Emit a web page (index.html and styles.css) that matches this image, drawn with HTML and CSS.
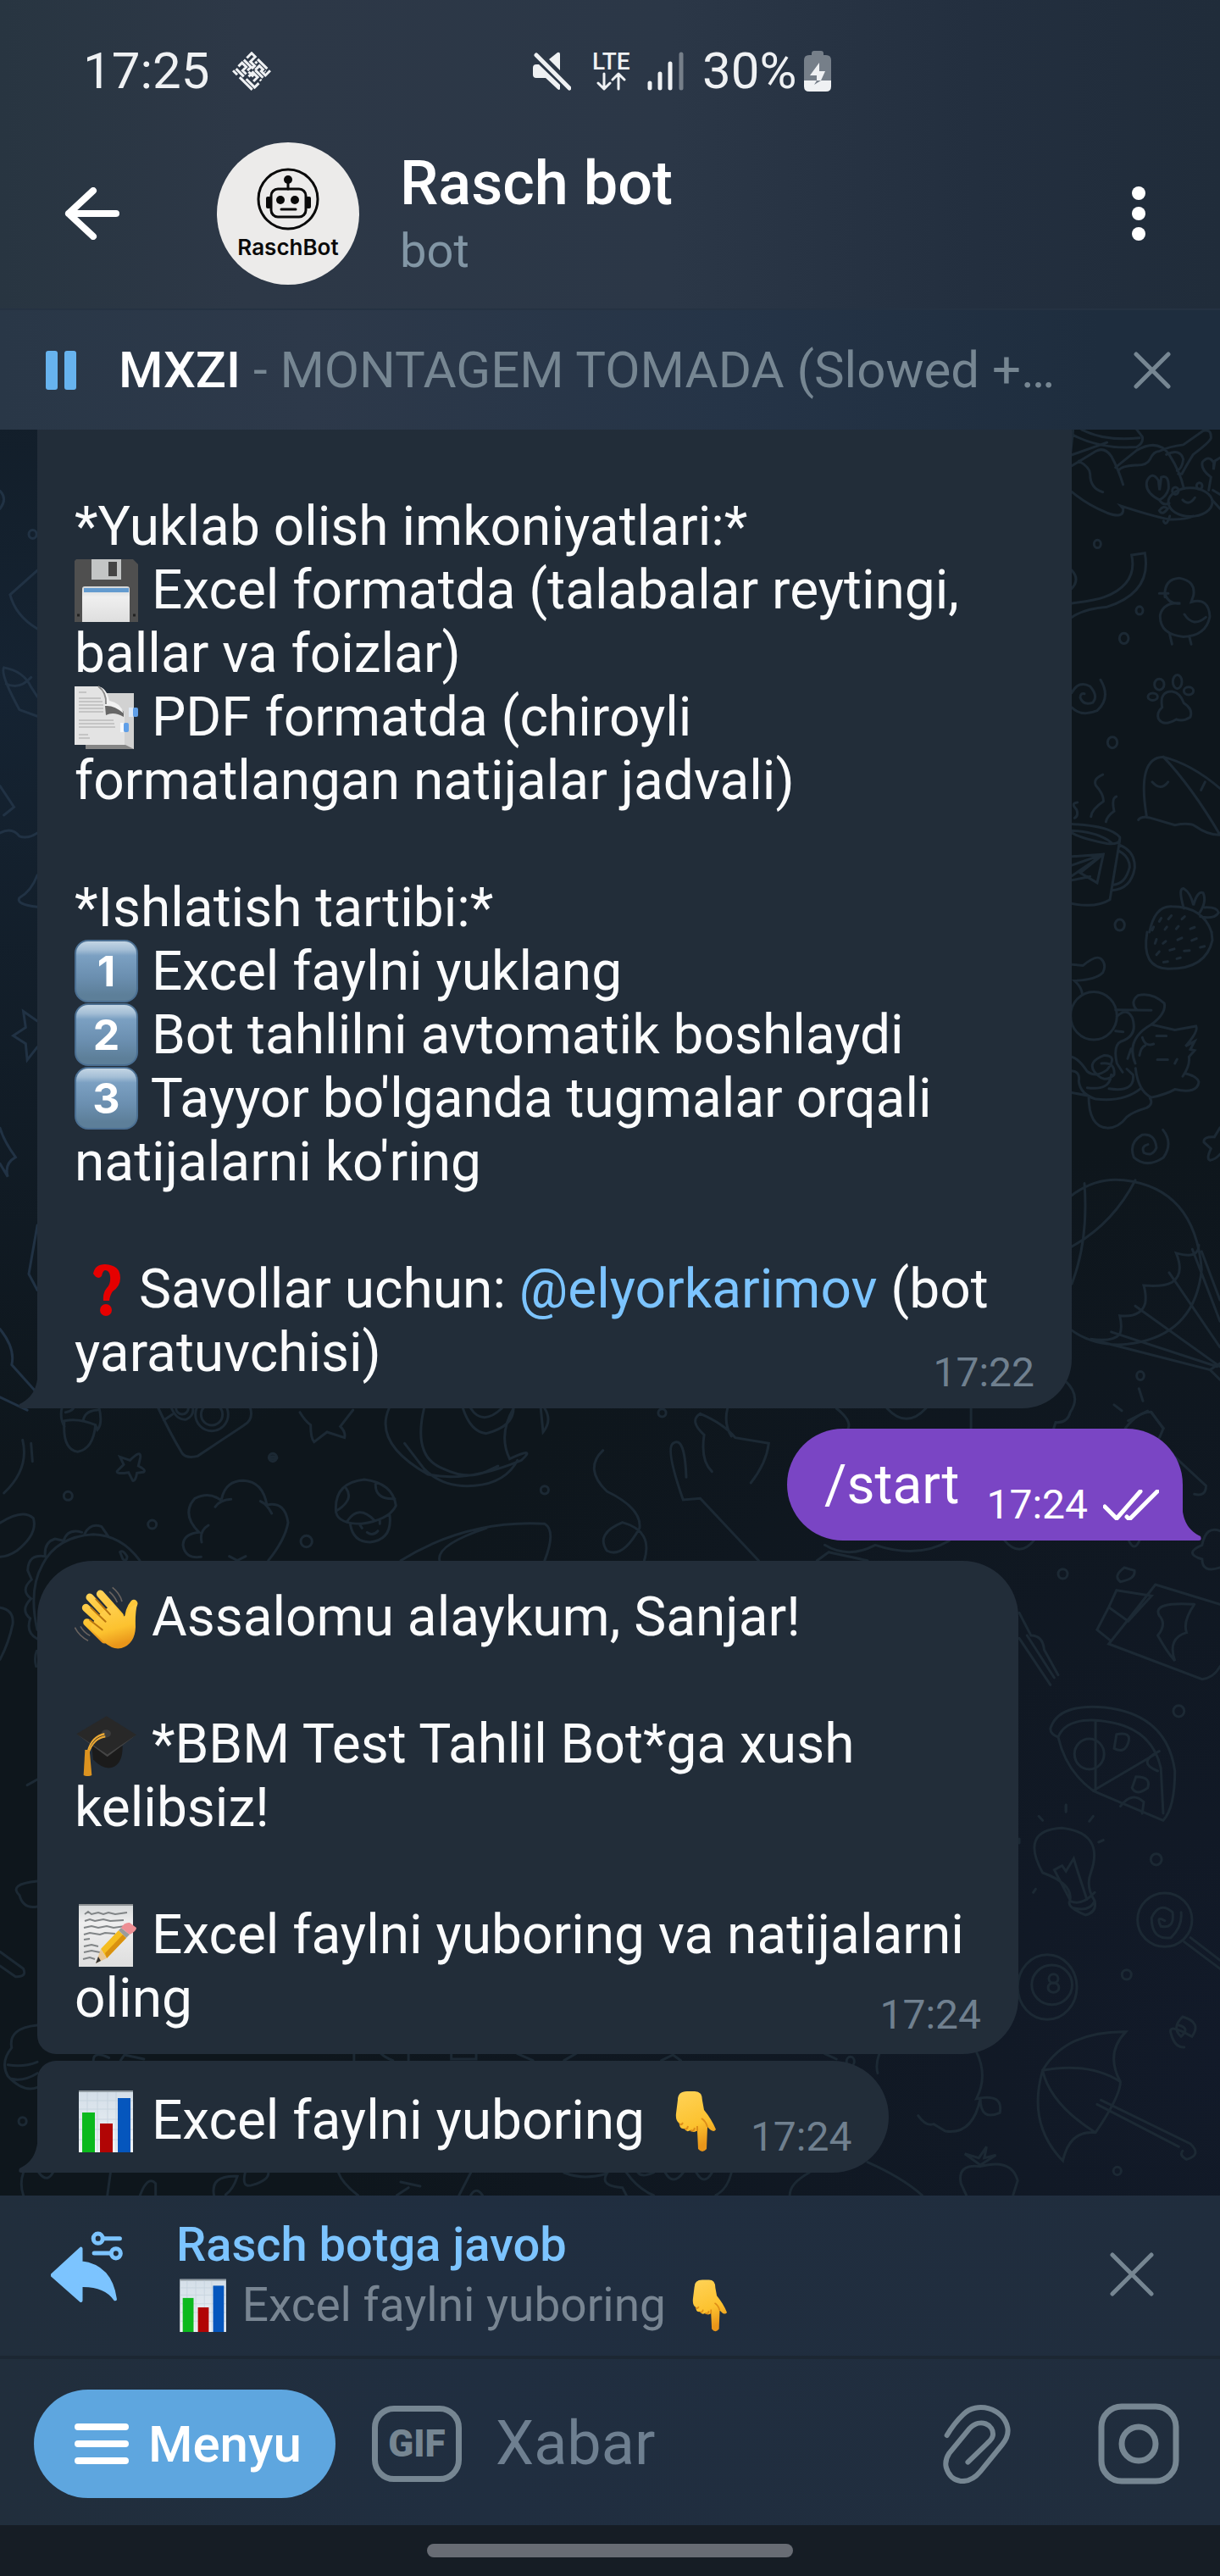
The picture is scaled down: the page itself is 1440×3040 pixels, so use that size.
FILE: index.html
```html
<!DOCTYPE html>
<html lang="uz">
<head>
<meta charset="utf-8">
<meta name="viewport" content="width=device-width, initial-scale=1">
<title>Rasch bot</title>
<link rel="stylesheet" href="styles.css">
</head>
<body>
<svg class="sprite" width="0" height="0" aria-hidden="true">
  <defs>
    <linearGradient id="skin" x1="0" y1="0" x2="0.3" y2="1"><stop offset="0" stop-color="#ffd358"/><stop offset="0.65" stop-color="#fcc22f"/><stop offset="1" stop-color="#e9961a"/></linearGradient>
    <linearGradient id="paper" x1="0" y1="0" x2="0" y2="1"><stop offset="0" stop-color="#d3d6d8"/><stop offset="0.3" stop-color="#efefef"/><stop offset="1" stop-color="#dedede"/></linearGradient>
    <linearGradient id="grid" x1="0" y1="0" x2="0" y2="1"><stop offset="0" stop-color="#d3dee8"/><stop offset="1" stop-color="#f0f4f7"/></linearGradient>
  </defs>
  <symbol id="chart" viewBox="0 0 75 75">
    <rect x="5" y="2" width="64" height="73" fill="url(#grid)"/>
    <path d="M5 3H69" stroke="#8f999f" stroke-width="2"/>
    <path d="M15 4V75M27 4V75M39 4V75M49 4V75M5 14H69M5 24H69M5 36H69M5 48H69M5 60H69" stroke="#bccbd8" stroke-width="1" opacity="0.6"/>
    <rect x="9" y="28" width="15" height="47" fill="#0cb91d"/>
    <rect x="30" y="41" width="15" height="34" fill="#b10505"/>
    <rect x="51" y="11" width="15" height="64" fill="#0556bd"/>
  </symbol>
  <symbol id="hand-down" viewBox="0 0 75 75">
    <path d="M23 13Q23 3 34 3H43Q52 3 52 14L54 25Q63 36 68 48Q65 53 58 45L57 71Q52 77 47 71L46 49Q42 53 38 49Q33 52 31 47Q25 48 25 41Q20 38 21 29Z" fill="url(#skin)"/>
    <path d="M25 41Q27 44 29 40M31 47Q34 49 35 44M38 49Q42 51 43 46M46 50V44M58 45Q56 38 51 35" fill="none" stroke="#dd8d18" stroke-width="2"/>
  </symbol>
</svg>

<header class="top">
  <div class="status">
    <div class="status-left">
      <span>17:25</span>
      <svg class="mosaic" viewBox="0 0 46 46" aria-hidden="true"><g transform="rotate(-45 23 23) translate(7 7)"><path d="M1 0V7M1 11V32M5 1V14M5 18V32H12M9 1H15V8H9V14M9 18H16V26H9M19 0V12H13M13 22V14M23 1H31V7H23V14H18M20 18V31M20 18H27V24H24V31H32M31 11V27M27 11V14M16 30V32M27 28V27" fill="none" stroke="#eff1f3" stroke-width="3"/></g></svg>
    </div>
    <div class="status-right">
      <svg class="mute" viewBox="0 0 45 46" aria-label="Ovozsiz"><path d="M5 15H7L32 39V44Q31 46 29 44L15 31H4Q0 31 0 27V19Q0 15 4 15ZM19 9L29 1Q32 0 32 3V22Z" fill="#eff1f3"/><path d="M6 2L45 41" stroke="#2d3847" stroke-width="5"/><path d="M4 4L43 43" stroke="#eff1f3" stroke-width="5" stroke-linecap="round"/></svg>
      <div class="lte"><span>LTE</span>
        <svg viewBox="0 0 46 22" aria-hidden="true"><path d="M14 2V19M7 13L14 20L21 13M31 20V3M24 9L31 2L38 9" fill="none" stroke="#eff1f3" stroke-width="3" stroke-linecap="round" stroke-linejoin="round"/></svg>
      </div>
      <svg class="signal" viewBox="0 0 44 46" aria-hidden="true"><path d="M3 37V43M15 26V43M27 14V43" stroke="#eff1f3" stroke-width="5" stroke-linecap="round"/><path d="M40 3V43" stroke="#767f89" stroke-width="5" stroke-linecap="round"/></svg>
      <span class="percent">30%</span>
      <svg class="battery" viewBox="0 0 32 48" aria-hidden="true"><path d="M9 5V3Q9 0 12 0H20Q23 0 23 3V5H26Q32 5 32 11V35H0V11Q0 5 6 5Z" fill="#767f89"/><path d="M0 35H32V42Q32 48 26 48H6Q0 48 0 42Z" fill="#eff1f3"/><path d="M18 14L7 29H15V35H20L25 24H18Z" fill="#eff1f3"/><path d="M12 40L15 35H20Z" fill="#767f89"/></svg>
    </div>
  </div>
  <div class="chat-head">
    <button class="icon-button back" aria-label="Orqaga"><svg viewBox="0 0 65 62" width="65" height="62"><path d="M34 4L5 31L34 58M5 31H61" fill="none" stroke="#fff" stroke-width="8" stroke-linecap="round" stroke-linejoin="round"/></svg></button>
    <div class="avatar">
      <svg viewBox="0 0 74 74" width="74" height="74" aria-hidden="true"><g fill="none" stroke="#0a0a0a" stroke-width="3"><circle cx="37" cy="37" r="35"/><rect x="17" y="25" width="41" height="33" rx="8"/><path d="M37 25V14M29 49H46" stroke-linecap="round"/></g><g fill="#0a0a0a"><circle cx="37" cy="14" r="5"/><circle cx="28" cy="38" r="5"/><circle cx="45" cy="38" r="5"/><rect x="11" y="34" width="6" height="14" rx="2"/><rect x="58" y="34" width="6" height="14" rx="2"/></g></svg>
      <span>RaschBot</span>
    </div>
    <div class="who">
      <h1>Rasch bot</h1>
      <p>bot</p>
    </div>
    <button class="icon-button" aria-label="Yana"><svg viewBox="0 0 40 66" width="40" height="66" fill="#fff"><circle cx="20" cy="9" r="8"/><circle cx="20" cy="33" r="8"/><circle cx="20" cy="57" r="8"/></svg></button>
  </div>
</header>

<section class="player">
  <button class="icon-button" aria-label="Pauza"><svg viewBox="0 0 36 46" width="36" height="46" fill="#67b3ee"><rect width="14" height="46" rx="3"/><rect x="22" width="14" height="46" rx="3"/></svg></button>
  <p class="track"><strong>MXZI</strong> - MONTAGEM TOMADA (Slowed +…</p>
  <button class="icon-button" aria-label="Yopish"><svg viewBox="0 0 44 44" width="44" height="44"><path d="M3 3L41 41M41 3L3 41" stroke="#768692" stroke-width="5" stroke-linecap="round"/></svg></button>
</section>

<main class="chat">
  <svg class="doodles" viewBox="0 507 1440 2084" preserveAspectRatio="xMaxYMax slice" aria-hidden="true">
    <g transform="translate(1160 500) scale(0.33333 0.38265)">
      <path d="M320 18L310 98L440 58M350 18Q430 55 555 44M320 35Q420 80 545 72Q570 60 565 40L545 18M315 130L400 85Q430 70 455 100Q480 140 497 188M340 115Q380 135 380 155Q380 200 425 211M315 210Q370 250 440 275Q500 295 497 262L488 253Q600 285 660 295Q720 297 745 285M470 135L545 82Q620 45 660 95Q700 150 712 200M480 145Q490 130 540 128Q580 130 592 110Q605 85 625 85Q660 70 710 65L780 22Q810 15 808 45Q800 60 745 95Q720 130 705 155L692 155M650 95Q700 75 710 110Q705 140 688 145"/>
      <ellipse cx="735" cy="242" rx="78" ry="44"/><path d="M708 235Q730 255 751 228M625 235Q570 210 582 175Q600 145 622 175L626 205L632 165Q660 155 658 200Q650 225 625 235Q640 255 660 245M625 268Q640 250 655 262Q635 285 625 268M640 300Q650 320 662 285M800 205L808 165Q770 140 778 118Q800 95 818 120L817 142L822 115L840 105M812 235L840 262M815 205L840 218"/><circle cx="682" cy="207" r="11"/><circle cx="767" cy="192" r="10"/>
      <circle cx="406" cy="371" r="12"/><circle cx="555" cy="576" r="12"/><circle cx="500" cy="662" r="16"/><circle cx="459" cy="983" r="17"/><circle cx="485" cy="1546" r="17"/>
      <path d="M315 554Q400 545 430 535Q550 495 527 405L574 399Q600 520 440 565Q360 570 315 597M315 452Q345 480 315 508M625 523H657M645 535Q640 480 695 476Q755 485 746 530L738 550Q800 535 804 595Q790 655 710 657Q625 650 628 590Q640 550 700 554Q660 560 645 525M714 588Q745 630 790 597M662 650L670 680M731 655L738 680"/>
      <path d="M315 830Q340 790 380 810Q410 840 390 860Q355 870 345 845Q345 830 360 833M315 875Q350 905 405 885Q455 845 417 790"/>
      <ellipse cx="602" cy="842" rx="17" ry="11"/><ellipse cx="625" cy="804" rx="17" ry="17"/><ellipse cx="689" cy="796" rx="16" ry="21"/><ellipse cx="729" cy="824" rx="17" ry="12"/><path d="M635 875Q625 825 670 826Q700 830 712 862Q745 880 735 905Q710 920 685 912Q640 935 622 910Q615 890 635 875Z"/>
      <path d="M580 1210Q545 1030 640 1028Q740 1120 840 1268Q800 1270 750 1240Q730 1230 680 1238L590 1215Q560 1210 551 1222M640 1028Q740 1050 840 1125M773 1130L787 1105M600 1105Q630 1135 656 1105M425 1082Q390 1095 400 1115Q430 1145 427 1165Q385 1190 383 1212M473 1150Q455 1155 465 1195Q440 1210 436 1228M335 1168Q310 1170 332 1190Q340 1210 325 1216"/>
      <path d="M315 1235Q450 1240 485 1275Q490 1300 440 1295Q350 1280 315 1262M315 1255Q410 1260 455 1292M485 1285L450 1468Q400 1495 315 1480M486 1300Q540 1320 538 1370Q525 1435 458 1439M483 1318Q520 1335 520 1368Q505 1420 463 1422M315 1335L427 1328L405 1416L345 1385L427 1328L315 1362M427 1328L315 1395M315 1408L380 1397"/>
      <path d="M590 1568Q610 1485 670 1489Q780 1490 810 1568M712 1495Q690 1430 712 1434Q735 1445 746 1485Q760 1440 780 1447Q795 1475 765 1512M785 1492Q830 1490 835 1508Q820 1530 770 1520M625 1535L632 1525M657 1528L668 1517M705 1528L715 1520M600 1562L605 1552M645 1560L652 1552M685 1558L693 1550M735 1558L750 1553"/>
    </g>
    <g transform="translate(1160 1100) scale(0.33333 0.38265)">
      <path d="M582 0Q560 110 655 113Q790 115 813 25L810 0M610 35L615 22M638 35L648 28M690 24L705 18M740 26L757 20M615 70L625 60M662 56L678 52M713 58L732 57M640 93L655 91M687 82L700 79M770 47L785 44"/>
      <path d="M315 100L355 103Q400 70 418 82Q440 100 425 125Q400 148 325 150Q350 170 352 190"/><ellipse cx="393" cy="258" rx="82" ry="74"/>
      <path d="M470 240L597 241M475 260Q510 230 530 265Q550 320 490 337Q460 350 475 405L495 432M470 305L497 308M597 285Q650 250 643 220Q600 185 550 195Q520 215 545 240M540 405Q505 330 597 285L680 302L755 290Q765 305 718 352L750 337L735 362L750 365L730 385Q735 410 708 445M525 360L513 390M565 325Q575 355 605 345M555 380Q560 355 575 350M615 320H650M618 393H655M680 405L688 392M541 420Q550 490 597 510Q650 500 680 485Q760 500 765 462Q760 445 715 435M315 385Q340 390 370 430Q400 450 440 425Q480 380 430 380Q370 400 395 430Q430 470 465 440Q470 400 420 405M315 428Q345 430 340 460Q345 500 400 515Q500 525 560 482M370 480Q450 490 455 440M447 483Q540 495 532 440L510 422M315 495L375 505Q375 600 440 604Q480 605 510 570Q530 555 580 542Q605 530 592 512"/>
      <path d="M585 655Q560 660 570 680Q600 695 615 665Q610 620 565 625Q515 650 535 695Q580 730 640 695Q675 650 638 610M840 603L820 632Q780 630 783 648L808 668Q790 700 805 704Q825 700 840 685"/>
      <path d="M315 812Q400 755 500 765Q750 790 775 1040Q750 1260 480 1273Q380 1270 315 1228M360 775Q375 950 315 1085M540 765Q460 900 315 970M765 965Q765 1010 685 990Q715 1055 670 1080Q640 1095 570 1090Q580 1120 575 1145Q560 1190 485 1183Q495 1220 485 1240Q460 1265 380 1255L805 1350L840 1380M775 985L840 1135M742 978L840 1200M660 1050L840 1280M540 1153L840 1340M455 1233L830 1340M805 1350L840 1330"/>
      <circle cx="558" cy="1368" r="13"/><path d="M553 1408L567 1446M465 1458L492 1476M290 1382Q350 1430 310 1480Q300 1515 258 1512L248 1540M505 1530Q550 1480 595 1480L640 1530L625 1560"/>
    </g>
    <g transform="translate(0 1660) scale(0.33333)">
      <path d="M68 0M220 0Q210 40 228 70M228 50Q280 40 338 65Q330 150 275 160Q220 150 228 50M350 0Q365 60 345 82L338 65M295 48Q300 15 345 12M232 20Q260 15 262 0M80 118Q105 220 14 306M110 130L115 194M558 0Q600 90 645 165Q660 185 700 175L865 65Q900 45 885 0M580 48L610 28M605 0Q625 50 660 45Q690 30 682 0"/><circle cx="645" cy="5" r="22"/><circle cx="750" cy="28" r="58"/><circle cx="750" cy="28" r="38"/>
      <path d="M1062 20Q1080 50 1100 65Q1100 110 1112 125L1158 90L1220 110Q1225 90 1205 70L1250 12M425 178L460 190Q500 150 497 180L490 210Q520 225 508 232L485 235Q480 265 470 262L455 233Q410 240 415 228L438 205Z"/>
      <circle cx="966" cy="180" r="14"/><circle cx="241" cy="316" r="15"/><circle cx="539" cy="417" r="15"/><circle cx="1085" cy="477" r="20"/>
      <path d="M0 412Q80 360 118 395Q135 450 60 510Q30 530 0 532M128 920Q120 890 130 865M160 530Q155 480 195 468L225 475Q240 430 290 445M300 450Q320 410 360 425L384 460M160 530Q100 520 98 580L112 612Q70 650 110 680Q70 720 107 750Q90 800 132 822M495 545Q430 455 330 452Q200 460 150 560Q100 650 132 790M0 712Q50 720 45 770Q30 840 0 895M425 515Q435 505 450 530Q450 550 435 540Z"/>
      <path d="M762 355Q780 330 818 328M785 325Q800 262 862 262Q930 265 945 348Q1010 335 1020 410Q1010 470 950 545M922 335Q945 345 962 378M780 330Q740 300 690 325Q640 380 705 445Q650 450 648 490Q655 540 712 532M738 420Q705 440 714 480M812 530L840 545L870 530"/>
      <path d="M1190 375Q1180 270 1290 258Q1390 270 1402 350Q1380 400 1280 415Q1200 415 1190 375M1330 268Q1325 330 1398 326M1226 290Q1255 330 1190 370M1230 405Q1270 345 1325 402M1240 415Q1250 480 1310 480Q1390 470 1380 385M1300 445Q1320 460 1338 440M1275 420L1282 430M1345 405V415"/>
    </g>
    <g transform="translate(0 1640) scale(0.91837 0.33333)">
      <path d="M500 66Q480 190 550 300Q600 330 670 250Q690 200 655 245Q640 160 660 66M545 66Q530 240 570 280Q600 320 625 290L640 270M520 190L545 280Q570 350 610 340Q650 330 665 250M595 66Q605 150 625 155Q660 130 660 66M605 66Q620 130 645 66M700 66Q710 110 698 150L695 66M515 605Q600 460 700 475Q715 500 700 605M565 605Q560 550 625 490"/>
      <path d="M775 215Q750 280 780 360Q825 420 822 490Q800 600 780 570Q765 510 800 470Q840 500 828 605M865 190Q855 210 878 390L900 385L975 605M865 190Q880 160 882 310M900 85Q885 110 905 160Q900 250 915 290M900 85Q930 120 945 170L988 190Q985 260 965 330M935 66Q930 120 940 165M1060 550Q1090 600 1125 550Q1180 600 1220 535M1065 575L1050 605M1065 575L1115 605M1140 66Q1165 140 1190 66M1248 66V138M1075 66Q1095 110 1090 138M1480 80L1495 138M1475 75L1450 110M1495 200L1550 340Q1550 380 1535 370M1568 500Q1550 480 1545 550Q1520 580 1545 600Q1545 650 1568 630"/>
      <circle cx="351" cy="241" r="5"/><ellipse cx="700" cy="355" rx="5" ry="14"/><ellipse cx="851" cy="82" rx="5" ry="14"/><ellipse cx="1366" cy="652" rx="6" ry="17"/><ellipse cx="1515" cy="1138" rx="7" ry="20"/><path d="M1290 530Q1310 600 1330 530M1450 530Q1458 580 1465 530"/>
      <path d="M1485 690L1568 760M1485 690Q1440 850 1425 900L1545 1025Q1560 1020 1568 980M1435 710L1480 730L1450 820L1425 770ZM1425 770L1410 850L1428 890M1535 760Q1480 750 1490 800Q1500 830 1488 870Q1500 930 1510 960Q1500 880 1525 860Q1520 820 1535 760M1310 790L1325 870Q1340 870 1342 920L1360 1010M1310 880L1350 1045M1320 870L1355 1020M1445 630Q1430 660 1440 680Q1460 670 1458 640Z"/>
      <path d="M1350 1200Q1360 1110 1420 1125Q1500 1150 1510 1350Q1510 1480 1495 1525Q1430 1450 1405 1420Q1370 1350 1360 1230Q1350 1220 1350 1200M1360 1230Q1370 1160 1415 1172Q1480 1190 1492 1340L1495 1500M1408 1175V1420M1405 1420L1485 1290"/><ellipse cx="1400" cy="1290" rx="19" ry="54"/><path d="M1435 1220Q1455 1210 1450 1250Q1445 1290 1432 1270ZM1460 1370Q1480 1370 1475 1410Q1460 1440 1455 1410ZM1440 1475Q1455 1420 1470 1460L1468 1500M1490 1280Q1460 1320 1488 1350M1370 1470V1490"/>
    </g>
    <g transform="translate(0 2100) scale(0.91837 0.33333)">
      <path d="M1370 90V115M1335 130L1340 145M1405 130L1400 148M1418 215L1412 222M1310 210V225M1328 400L1331 388M1375 430Q1380 370 1340 330Q1310 180 1365 172Q1420 190 1402 330Q1395 380 1407 430Q1410 470 1395 480Q1370 450 1375 430Q1390 450 1407 400M1375 425L1355 320L1365 305L1370 325L1380 280L1385 325M1385 325L1397 425M1380 455Q1400 470 1407 430"/>
      <ellipse cx="1486" cy="283" rx="7" ry="20"/><ellipse cx="1448" cy="691" rx="6" ry="17"/><ellipse cx="1436" cy="1386" rx="5" ry="14"/><ellipse cx="1497" cy="497" rx="35" ry="95"/><path d="M1497 500Q1485 480 1492 520Q1510 530 1507 470Q1490 430 1480 490Q1480 570 1505 560Q1520 520 1518 470M1530 560L1568 640M1522 575L1568 670"/>
      <ellipse cx="1346" cy="735" rx="38" ry="115"/><ellipse cx="1352" cy="727" rx="26" ry="70"/><ellipse cx="1354" cy="705" rx="6" ry="16"/><ellipse cx="1354" cy="737" rx="7" ry="17"/>
      <path d="M1515 870Q1530 880 1518 910Q1505 880 1520 840Q1545 860 1532 910Q1500 860 1505 900Q1510 950 1522 948M1340 1030Q1370 890 1447 893Q1420 970 1440 1070Q1400 1000 1340 1030Q1350 1150 1408 1250Q1375 1240 1366 1350Q1320 1220 1340 1030M1440 1070Q1440 1120 1408 1250M1415 1135L1530 1290Q1545 1330 1525 1345Q1515 1330 1520 1315M1410 1150L1515 1300"/>
      <path d="M1255 965Q1270 1050 1255 1130Q1290 1110 1285 1180Q1260 1210 1260 1130Q1250 1260 1215 1245L1200 1220Q1190 1230 1180 1190M1130 971Q1125 1010 1128 1040M1260 1370Q1230 1360 1235 1430L1242 1472M1260 1370Q1300 1340 1308 1420L1302 1472M1260 1365L1240 1325L1258 1340L1268 1300L1265 1340L1280 1330Z"/>
      <path d="M1115 1355Q1160 1410 1185 1472M1040 1392Q1015 1430 1015 1472M820 1392Q825 1410 840 1392M855 1392Q865 1440 878 1392M895 1392Q905 1440 915 1392M725 1392Q750 1420 780 1395Q770 1440 800 1445L805 1472M805 1392Q820 1450 840 1472M940 1392Q935 1450 920 1472M435 1392Q440 1430 460 1472M605 1392L590 1472M515 1425L540 1440M525 1445L510 1472M605 1472Q612 1440 620 1472M275 1472Q270 1400 305 1405Q300 1450 290 1470M315 1392Q310 1450 325 1435Q345 1420 345 1392M180 1472Q190 1400 200 1430V1472M30 1392Q25 1430 30 1472M142 1392L138 1472M50 1392Q60 1430 68 1392"/>
      <path d="M455 971V995M490 971Q495 985 505 995M525 971V995M580 971V990H612V971M665 971L685 995M740 971L725 995M850 995L865 975L875 995M120 995Q120 960 140 985M155 995L160 975L185 990M1060 971L1075 990M48 870Q10 880 15 950Q0 1000 10 1050Q30 1110 48 1090M10 1010Q30 1020 48 1000M15 1060Q30 1070 48 1040M48 360Q10 370 25 410Q30 460 48 450M0 610L30 670Q35 700 20 698L0 660M48 0L35 20"/>
      <ellipse cx="1093" cy="998" rx="5" ry="16"/><ellipse cx="29" cy="1210" rx="5" ry="14"/>
    </g>
    <g class="doodles-left" transform="translate(0 520) scale(0.91837 0.38265)">
      <path d="M0 155Q10 180 0 210M48 400L13 475Q20 540 48 580M5 700Q30 710 40 760L48 790M5 700Q0 720 25 830L48 850M8 750Q25 770 40 730M0 1065L18 1130L5 1155M0 1210Q15 1190 25 1220Q35 1230 48 1210M48 1340Q40 1390 25 1410Q20 1430 48 1438"/><ellipse cx="42" cy="289" rx="5" ry="13"/>
      <path d="M48 1790L30 1760L33 1810L17 1835L33 1860L35 1910L48 1870M0 2120Q5 2160 20 2210Q5 2230 10 2270L0 2230M48 2420L37 2570L48 2620M0 2740Q20 2800 15 2850L45 2930M0 2950L35 2990"/>
    </g>
  </svg>

  <article class="bubble in clipped tail-left">
    <p class="text"><br>*Yuklab olish imkoniyatlari:*<br>
      <svg class="emoji" viewBox="0 0 75 75" role="img" aria-label="disketa"><path d="M2 1H69L75 7V75H0V3Z" fill="#4f4f4f"/><rect x="20" y="1" width="35" height="24" fill="#c3c5c5"/><rect x="40" y="4" width="10" height="17" fill="#444"/><path d="M9 75V36Q9 33 12 33H62Q65 33 65 36V75Z" fill="url(#paper)"/><rect x="11" y="35" width="53" height="5" fill="#639bcf"/><path d="M3 67H6M69 67H72" stroke="#222" stroke-width="3"/></svg> Excel formatda (talabalar reytingi,<br>ballar va foizlar)<br>
      <svg class="emoji" viewBox="0 0 75 75" role="img" aria-label="sahifalar"><rect x="13" y="9" width="57" height="66" fill="#d2d2d2"/><path d="M13 70H60L70 75H13Z" fill="#858585"/><path d="M0 1H28Q36 3 40 18Q56 22 59 35V70H0Z" fill="#e3e3e3"/><path d="M36 24Q48 21 58 31V37Q46 30 37 35Z" fill="#666"/><path d="M28 1Q38 3 41 18Q54 20 58 33Q47 23 36 24Q38 9 28 1Z" fill="#f2f2f2"/><path d="M28 1Q38 8 37 22" fill="none" stroke="#8a8a8a" stroke-width="2"/><path d="M5 8H14M5 15H31M5 19H33M5 23H34M5 27H34M5 31H34M5 41H46M5 45H47M5 49H48M5 58H16M5 62H18" stroke="#a6a6a6" stroke-width="1"/><rect x="69" y="26" width="6" height="11" rx="2" fill="#5f9fe8"/><rect x="64" y="26" width="5" height="11" fill="#dfe9f4"/><rect x="58" y="44" width="6" height="11" rx="2" fill="#5f9fe8"/><rect x="54" y="44" width="4" height="11" fill="#f4f8fc"/></svg> PDF formatda (chiroyli<br>formatlangan natijalar jadvali)<br><br>*Ishlatish tartibi:*<br>
      <span class="keycap">1</span> Excel faylni yuklang<br>
      <span class="keycap">2</span> Bot tahlilni avtomatik boshlaydi<br>
      <span class="keycap">3</span> Tayyor bo'lganda tugmalar orqali<br>natijalarni ko'ring<br><br>
      <svg class="emoji question" viewBox="0 0 60 75" role="img" aria-label="savol"><path d="M22 19Q24 8 36 8Q54 9 54 24Q54 34 45 40Q42 44 41 51H34Q33 42 38 36Q43 31 42 22Q41 15 36 15Q33 16 32 22Q27 27 22 19Z" fill="#e60000"/><circle cx="37" cy="62" r="7" fill="#e60000"/></svg> Savollar uchun: <a href="#elyorkarimov">@elyorkarimov</a> (bot<br>yaratuvchisi)</p>
    <time>17:22</time>
    <svg class="tail" viewBox="0 0 23 44" aria-hidden="true"><path d="M23 0C22 22 15 32 1 39Q-1 44 3 44H23Z" fill="#222d39"/></svg>
  </article>

  <article class="bubble out short tail-right">
    <p class="text">/start</p>
    <div class="meta"><time>17:24</time><svg viewBox="0 0 66 36" width="66" height="36" aria-label="O'qildi"><path d="M2 20L16 34L44 2M28 32L31 35L64 2" fill="none" stroke="#fff" stroke-width="5" stroke-linejoin="round" stroke-linecap="round"/></svg></div>
    <svg class="tail" viewBox="0 0 23 44" aria-hidden="true"><path d="M0 0C1 22 8 32 22 39Q24 44 20 44H0Z" fill="#7a45c4"/></svg>
  </article>

  <article class="bubble in medium">
    <p class="text"><svg class="emoji" viewBox="0 0 75 75" role="img" aria-label="salom"><g transform="scale(0.33333) translate(-264 -633)"><g fill="none" stroke="url(#skin)" stroke-width="27" stroke-linecap="round"><path d="M355 663L425 742M318 675L405 768M304 712L390 792M308 764L370 825M474 697Q450 725 455 780"/></g><path d="M400 700L435 743Q455 740 460 712Q480 700 486 700Q478 730 480 780Q478 840 430 855Q400 862 370 835L320 785Q335 740 400 700Z" fill="url(#skin)"/><path d="M340 682L390 736M322 712L374 761M318 755L362 790" fill="none" stroke="#b8750f" stroke-width="6" stroke-linecap="round"/><path d="M398 640Q424 660 432 690M387 655Q407 672 415 693M265 782Q280 812 312 829M285 778Q297 800 319 811" fill="none" stroke="#68625f" stroke-width="5"/></g></svg> Assalomu alaykum, Sanjar!<br><br>
      <svg class="emoji" viewBox="0 0 75 75" role="img" aria-label="bitiruvchi qalpogʻi"><g transform="scale(0.33333 0.45914) translate(-84 -394)"><path d="M145 480L150 515Q190 545 225 533Q255 520 254 480Z" fill="#1b1b1b"/><path d="M91 449L197 403L303 451L200 506Z" fill="#282828"/><path d="M91 449L200 502L303 451L200 508Z" fill="#454545"/><ellipse cx="196" cy="448" rx="17" ry="10" fill="#3c3c3c"/><path d="M190 449Q145 455 130 495M193 456Q150 460 133 500" fill="none" stroke="#edaa35" stroke-width="5"/><path d="M121 490H137L145 555Q130 560 116 555Z" fill="#dc9320"/></g></svg> *BBM Test Tahlil Bot*ga xush<br>kelibsiz!<br><br>
      <svg class="emoji" viewBox="0 0 75 75" role="img" aria-label="eslatma"><rect x="5" y="1" width="64" height="74" fill="url(#paper)"/><path d="M5 2H69" stroke="#8d9194" stroke-width="2"/><path d="M12 13L16 10L20 13L28 11L34 13L40 11L48 13L62 11M12 21L18 19L24 21L34 19L42 21L58 20M11 29L20 27L28 29L38 27L46 29L60 27M11 37L18 35L30 37L36 35L48 36M11 43L18 42M11 51L20 49L28 51M11 58L20 56L30 58M10 66L18 64L24 66" fill="none" stroke="#808486" stroke-width="2"/><path d="M31 54L52 32L61 41L38 65Z" fill="#f5bd20"/><path d="M36 59L57 37L61 41L38 65Z" fill="#d9910f"/><path d="M31 54L38 65L25 71Z" fill="#e8c795"/><path d="M28 63L31 68L25 71Z" fill="#333"/><path d="M52 32L55 29L65 37L61 41Z" fill="#9b9b9b"/><path d="M55 29Q59 22 65 23L73 29Q73 33 65 37Z" fill="#ee8f94"/></svg> Excel faylni yuboring va natijalarni<br>oling</p>
    <time>17:24</time>
  </article>

  <article class="bubble in short last tail-left">
    <p class="text"><svg class="emoji" role="img" aria-label="grafik"><use href="#chart"/></svg> Excel faylni yuboring <svg class="emoji" role="img" aria-label="pastga"><use href="#hand-down"/></svg></p>
    <time>17:24</time>
    <svg class="tail" viewBox="0 0 23 44" aria-hidden="true"><path d="M23 0C22 22 15 32 1 39Q-1 44 3 44H23Z" fill="#222d39"/></svg>
  </article>
</main>

<footer class="bottom">
  <section class="reply">
    <svg class="reply-icon" viewBox="0 0 88 86" aria-hidden="true"><g transform="translate(-60 -91) scale(0.91837 0.33333)"><path d="M67 432L104 338V388Q142 400 148 517Q135 465 104 468V522Z" fill="#7cc4ff" stroke="#7cc4ff" stroke-width="4" stroke-linejoin="round"/><g fill="none" stroke="#7cc4ff" stroke-width="5" stroke-linecap="round"><ellipse cx="126" cy="302" rx="6" ry="17"/><path d="M133 302H154M121 354H142"/><ellipse cx="149" cy="355" rx="6" ry="17"/></g></g></svg>
    <div class="reply-body">
      <h2>Rasch botga javob</h2>
      <p><svg class="emoji small" role="img" aria-label="grafik"><use href="#chart"/></svg> Excel faylni yuboring <svg class="emoji small" role="img" aria-label="pastga"><use href="#hand-down"/></svg></p>
    </div>
    <button class="icon-button" aria-label="Bekor qilish"><svg viewBox="0 0 52 52" width="52" height="52"><path d="M3 3L49 49M49 3L3 49" stroke="#768692" stroke-width="5" stroke-linecap="round"/></svg></button>
  </section>
  <form class="composer">
    <button type="button" class="menu"><svg viewBox="0 0 64 48" width="64" height="48" aria-hidden="true"><path d="M4 4H60M4 24H60M4 44H60" stroke="#fff" stroke-width="8" stroke-linecap="round"/></svg>Menyu</button>
    <button type="button" class="gif">GIF</button>
    <input type="text" placeholder="Xabar" aria-label="Xabar">
    <button type="button" class="icon-button" aria-label="Biriktirish"><svg viewBox="0 0 82 94" width="82" height="94"><g transform="translate(-1112 -297) scale(0.91837 0.33333)"><path d="M1217 1002Q1226 960 1238 928C1255 880 1290 905 1295 975Q1297 1005 1288 1035L1260 1130C1245 1180 1222 1175 1216 1115Q1214 1090 1220 1065L1246 978C1260 938 1278 965 1276 1003Q1275 1015 1269 1030L1244 1097" fill="none" stroke="#768692" stroke-width="6" stroke-linecap="round"/></g></svg></button>
    <button type="button" class="icon-button" aria-label="Kamera"><svg viewBox="0 0 96 96" width="96" height="96"><g fill="none" stroke="#768692" stroke-width="7"><rect x="4" y="4" width="88" height="88" rx="24"/><circle cx="48" cy="48" r="20"/></g></svg></button>
  </form>
  <div class="nav"><span></span></div>
</footer>
</body>
</html>
```
FILE: styles.css
```css
* { box-sizing: border-box; }

body {
  margin: 0;
  height: 100vh;
  display: flex;
  flex-direction: column;
  background: #161d25;
  color: #fafbfc;
  font-family: Roboto, "Noto Sans", sans-serif;
  font-size: 64px;
  line-height: 75px;
}

h1, h2, p { margin: 0; font-weight: 400; }
a { color: #7cc4ff; text-decoration: none; }
svg { display: block; flex: none; }
button { font-family: inherit; border: 0; padding: 0; background: none; color: inherit; cursor: pointer; }
.sprite { position: absolute; }
.icon-button { flex: none; }

/* status bar and chat header */
.top {
  background: linear-gradient(90deg, #283541 0, #2d3847 20%, #2b3747 55%, #232f3f 80%, #202c3a 100%);
}
.status {
  display: grid;
  grid-template-columns: 629fr 811fr;
  padding-top: 49px;
  font-size: 60px;
  line-height: 70px;
  color: #eff1f3;
}
.status-left, .status-right { display: flex; align-items: center; }
.status-left { padding-left: 98px; gap: 27px; }
.mosaic { width: 46px; height: 46px; }
.mute { width: 45px; height: 46px; margin-right: 25px; }
.lte { width: 46px; margin-right: 19px; font-size: 28px; line-height: 24px; font-weight: 500; }
.lte span { display: block; }
.signal { width: 44px; height: 46px; margin-right: 21px; }
.percent { margin-right: 9px; }
.battery { width: 32px; height: 48px; }

.chat-head {
  display: flex;
  align-items: center;
  padding: 49px 76px 28px;
}
.avatar {
  width: 168px;
  height: 168px;
  flex: none;
  margin: 0 48px 0 115px;
  padding-top: 30px;
  border-radius: 50%;
  background: #ecebea;
  color: #0a0a0a;
  display: flex;
  flex-direction: column;
  align-items: center;
  gap: 4px;
  font: 600 26px/32px Inter, sans-serif;
}
.who { flex: 1; }
.who h1 { font-size: 72px; line-height: 84px; font-weight: 500; color: #fff; }
.who p { margin-top: 4px; font-size: 56px; line-height: 66px; color: #8296a5; }

.player {
  display: flex;
  align-items: center;
  gap: 50px;
  height: 143px;
  flex: none;
  padding: 0 58px 0 54px;
  border-top: 2px solid #253242;
  background: linear-gradient(90deg, #293747 0, #2d394a 25%, #253447 60%, #1e2d3e 90%);
  font-size: 60px;
  line-height: 70px;
  color: #768692;
}
.track { flex: 1; min-width: 0; white-space: nowrap; overflow: hidden; text-overflow: ellipsis; }
.track strong { font-weight: 500; color: #fff; }

/* message list */
.chat {
  position: relative;
  flex: 1;
  min-height: 0;
  overflow: hidden;
  display: flex;
  flex-direction: column;
  justify-content: flex-end;
  padding: 0 44px 27px;
  background:
    radial-gradient(circle at 0 15%, #152332 0, rgba(21, 35, 50, 0) 40%),
    radial-gradient(circle at 100% 92%, #121a29 0, rgba(18, 26, 41, 0) 45%),
    #0e161c;
}
.doodles {
  position: absolute;
  inset: 0;
  width: 100%;
  height: 100%;
  fill: none;
  stroke: #1c2934;
  stroke-width: 3;
  stroke-linecap: round;
}
.doodles * { vector-effect: non-scaling-stroke; }
.doodles-left { stroke: #213244; }

.bubble {
  position: relative;
  flex: none;
  display: grid;
  width: fit-content;
  max-width: 1221px;
  padding: 29px 44px 28px;
  border-radius: 66px;
}
.text, .bubble > time { grid-area: 1 / 1; }
.in { background: #222d39; }
.out {
  background: #7a45c4;
  align-self: flex-end;
  margin: 24px 0;
  padding-right: 28px;
  color: #fff;
}
.clipped { width: 100%; border-radius: 0 0 58px 0; }
.medium { width: 100%; max-width: 1158px; border-bottom-left-radius: 22px; }
.short { grid-template-columns: auto auto; gap: 32px; }
.short > time { grid-area: 1 / 2; }
.last { gap: 34px; margin-top: 8px; padding-top: 33px; padding-bottom: 24px; border-top-left-radius: 22px; }
.tail-left { border-bottom-left-radius: 0; }
.tail-right { border-bottom-right-radius: 0; }

time { font-size: 48px; line-height: 56px; color: #70808f; }
.bubble > time, .meta { align-self: end; justify-self: end; margin-bottom: -14px; }
.medium > time, .last > time { margin-bottom: -10px; }
.meta { display: flex; align-items: center; gap: 18px; }
.meta time { color: #fff; }

.tail { position: absolute; bottom: 0; width: 23px; height: 44px; }
.tail-left .tail { left: -22px; }
.tail-right .tail { right: -22px; }

.emoji { display: inline-block; width: 75px; height: 75px; vertical-align: top; }
.emoji.question { width: 60px; }
.emoji.small { width: 64px; height: 64px; }
.keycap {
  display: inline-block;
  width: 75px;
  height: 74px;
  vertical-align: top;
  border-radius: 16px;
  border: 2px solid #4b6f92;
  background: linear-gradient(#c3d5e4 0, #a5bfd6 14%, #7ba0c2 24%, #6b8fb0 60%, #5d7f99 90%);
  color: #fff;
  text-align: center;
  font: 700 50px/70px Inter, sans-serif;
}

/* reply preview and composer */
.bottom { flex: none; background: linear-gradient(90deg, #212e3c 0, #202e40 40%, #202d3d 100%); }
.reply {
  display: flex;
  align-items: center;
  padding: 25px 78px 28px 60px;
  border-bottom: 4px solid #1c2733;
}
.reply-icon { width: 88px; height: 86px; align-self: flex-start; margin-top: 16px; }
.reply-icon *, .composer g * { vector-effect: non-scaling-stroke; }
.reply-body { flex: 1; margin-left: 60px; }
.reply h2 { font-size: 56px; line-height: 66px; font-weight: 500; color: #7cc4ff; }
.reply p { margin-top: 6px; font-size: 55px; line-height: 64px; color: #788592; }

.composer {
  display: flex;
  align-items: center;
  height: 196px;
  padding: 4px 48px 0 40px;
}
.menu {
  flex: none;
  width: 356px;
  height: 128px;
  padding-left: 48px;
  border-radius: 64px;
  background: #5ea6df;
  color: #fff;
  display: flex;
  align-items: center;
  gap: 23px;
  font-size: 60px;
  font-weight: 500;
}
.gif {
  flex: none;
  width: 106px;
  height: 90px;
  margin: 0 40px 0 43px;
  border: 7px solid #768692;
  border-radius: 26px;
  color: #768692;
  font-size: 44px;
  font-weight: 900;
}
.composer input {
  flex: 1;
  min-width: 0;
  border: 0;
  padding: 0;
  outline: 0;
  background: none;
  color: #fff;
  font: 72px/84px Roboto, "Noto Sans", sans-serif;
}
.composer input::placeholder { color: #6e7f90; opacity: 1; }
.composer .icon-button { margin-left: 102px; }

.nav {
  height: 60px;
  display: flex;
  justify-content: center;
  padding-top: 22px;
  background: #161d25;
}
.nav span { width: 30%; height: 16px; border-radius: 8px; background: #686c74; }
```
